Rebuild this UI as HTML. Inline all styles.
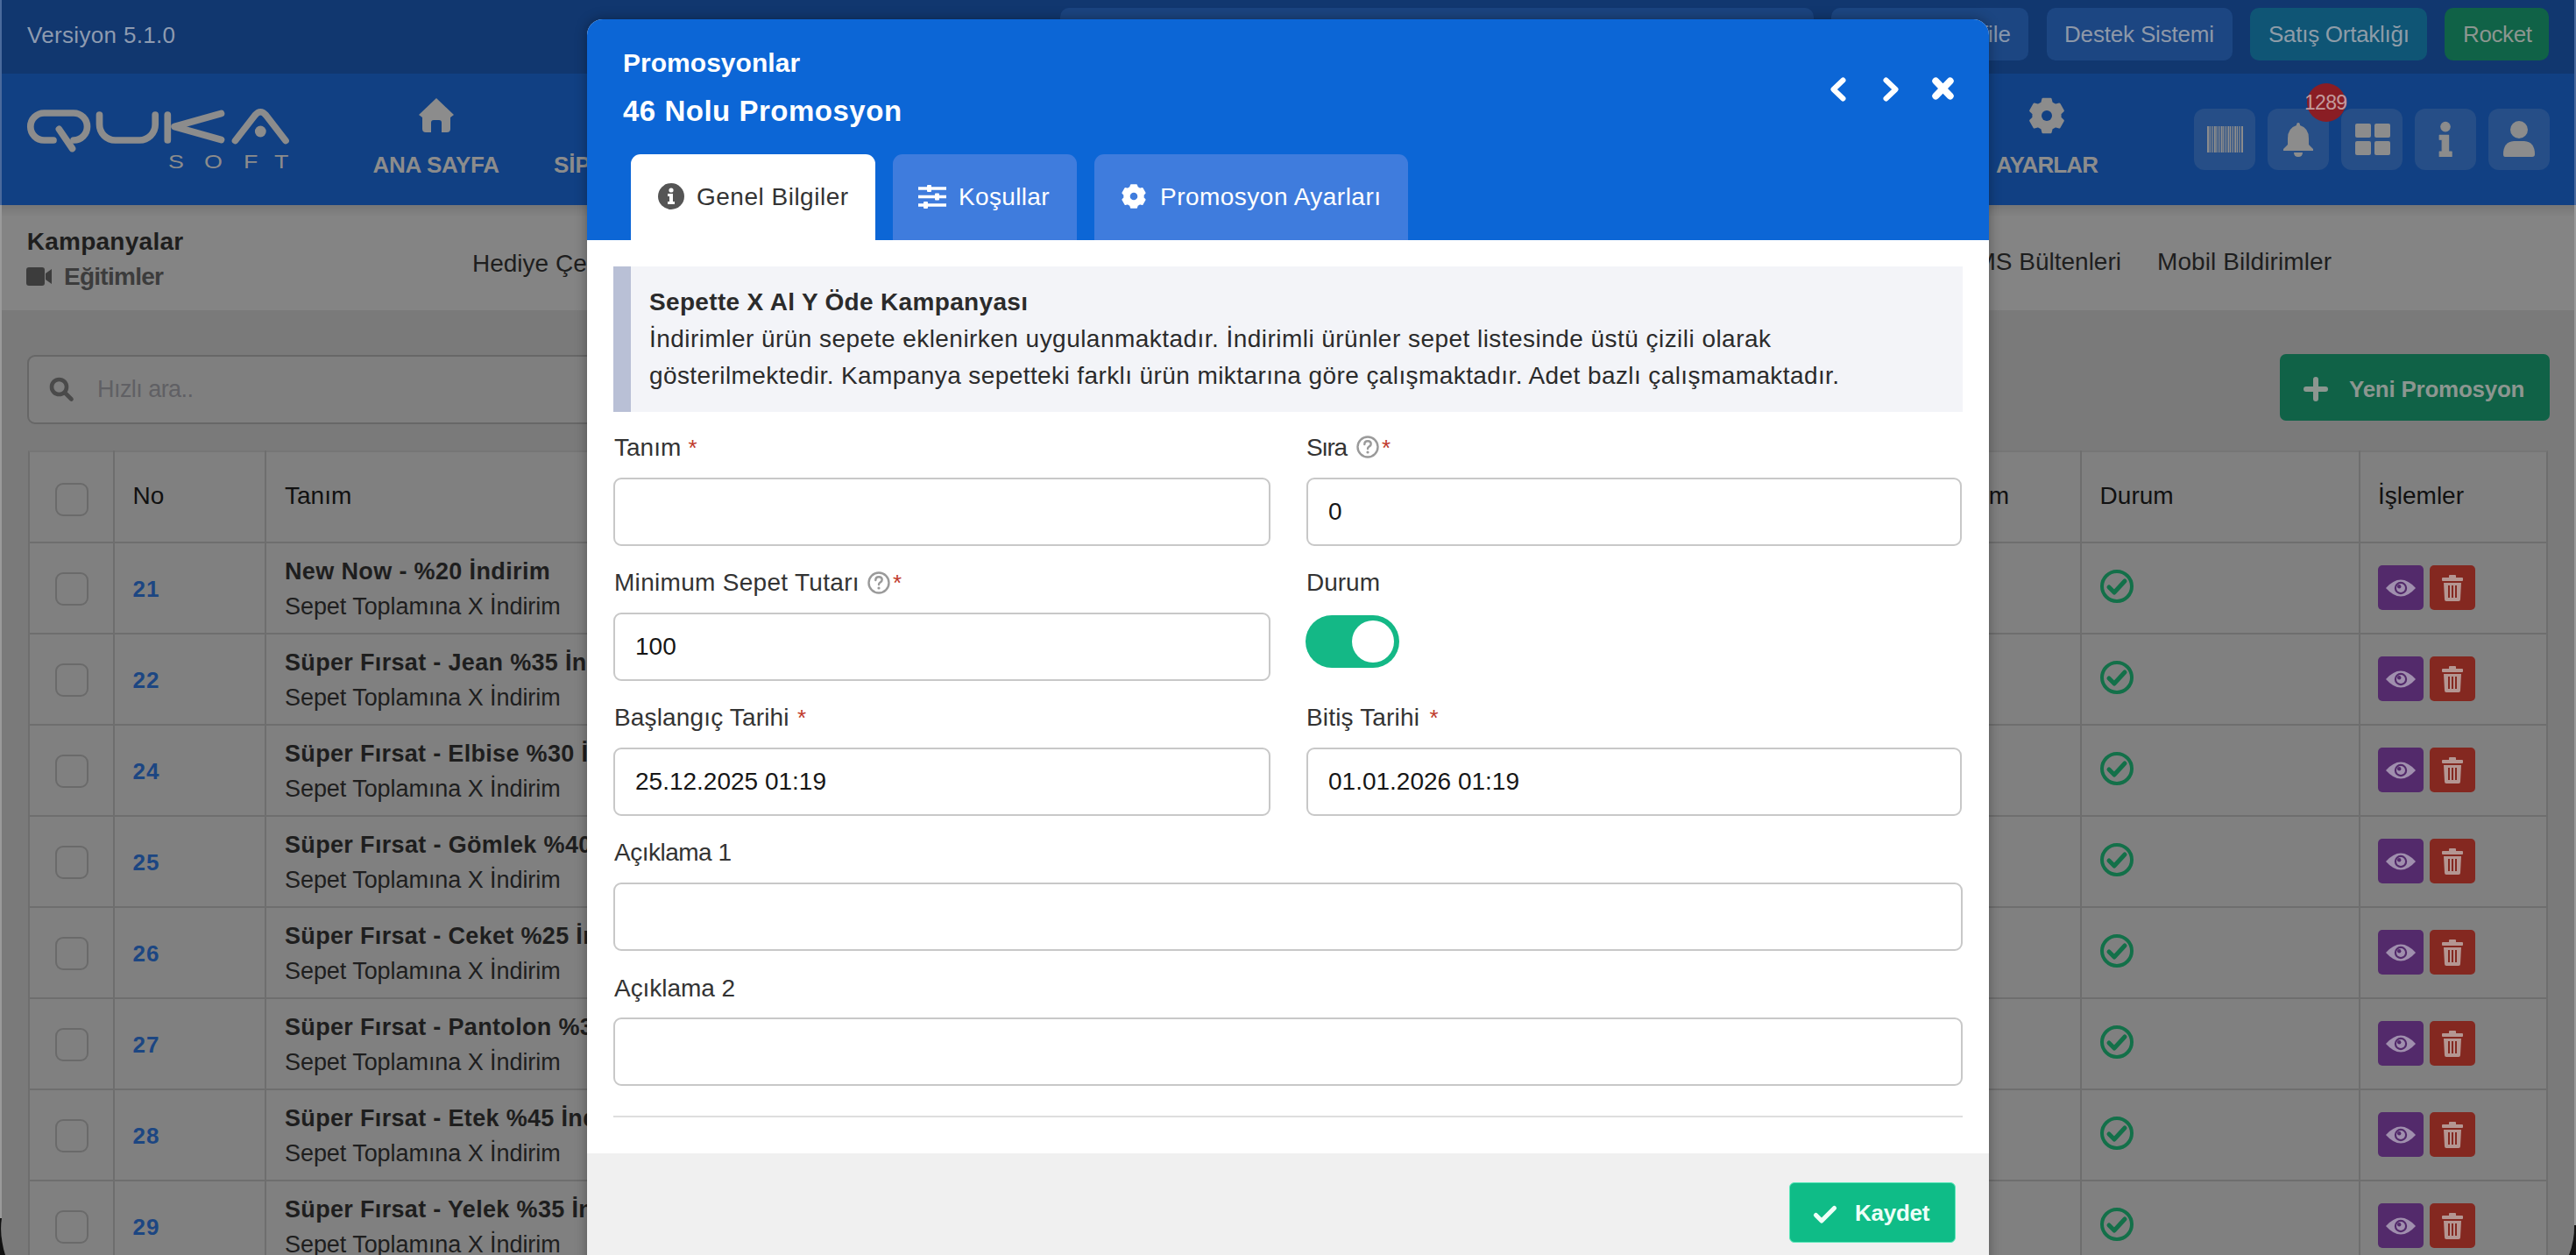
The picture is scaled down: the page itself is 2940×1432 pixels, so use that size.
<!DOCTYPE html>
<html><head><meta charset="utf-8"><style>
*{box-sizing:border-box;margin:0;padding:0}
html,body{width:2940px;height:1432px;overflow:hidden}
body{position:relative;background:#7a7a7a;font-family:"Liberation Sans",sans-serif;color:#1b1b1b}
.a{position:absolute}
.t{position:absolute;white-space:nowrap;line-height:1}
svg{position:absolute;overflow:visible}
</style></head><body>
<div class="a" style="left:0px;top:0px;width:2940px;height:84px;background:#11376f;"></div>
<div class="a" style="left:0px;top:84px;width:2940px;height:150px;background:#114083;"></div>
<div class="a" style="left:0px;top:234px;width:2940px;height:120px;background:#848484;"></div>
<div class="a" style="left:0px;top:234px;width:2940px;height:14px;background:linear-gradient(rgba(0,0,0,0.1),rgba(0,0,0,0));"></div>
<div class="a" style="left:0px;top:0px;width:2px;height:234px;background:#4a6a9c;"></div>
<div class="a" style="left:0px;top:234px;width:2px;height:1198px;background:#9a9a9a;"></div>
<div class="a" style="left:2938px;top:0px;width:2px;height:234px;background:#4a6a9c;"></div>
<div class="a" style="left:2938px;top:234px;width:2px;height:1198px;background:#9a9a9a;"></div>
<div class="t" style="left:31.0px;top:27.0px;font-size:26px;color:#8e9bb0;letter-spacing:0.33px;">Versiyon 5.1.0</div>
<div class="a" style="left:1210px;top:9px;width:860px;height:60px;background:#1b4480;border-radius:10px"></div>
<div class="a" style="left:2090px;top:9px;width:225px;height:60px;background:#1c4682;border-radius:10px"></div>
<div class="t" style="left:1993.0px;top:25.5px;font-size:26px;color:#8796ac;">Mobil Uygulama ve Profile</div>
<div class="a" style="left:2336px;top:9px;width:212px;height:60px;background:#1c4682;border-radius:10px"></div>
<div class="t" style="left:2356.0px;top:25.5px;font-size:26px;color:#8e98a8;letter-spacing:-0.18px;">Destek Sistemi</div>
<div class="a" style="left:2568px;top:9px;width:202px;height:60px;background:#0f5575;border-radius:10px"></div>
<div class="t" style="left:2589.0px;top:25.5px;font-size:26px;color:#8e9ca8;letter-spacing:-0.27px;">Satış Ortaklığı</div>
<div class="a" style="left:2790px;top:9px;width:119px;height:60px;background:#106247;border-radius:10px"></div>
<div class="t" style="left:2811.0px;top:25.5px;font-size:26px;color:#8c9690;letter-spacing:-0.38px;">Rocket</div>
<svg style="left:0;top:0" width="340" height="234" viewBox="0 0 340 234">
<g fill="none" stroke="#8c8c8c" stroke-width="7.7" stroke-linecap="round" stroke-linejoin="round">
<path d="M61 160 H50.3 A15.5 15.5 0 0 1 50.3 129 H84 A15.5 15.5 0 0 1 84 160"/>
<path d="M67.4 147.4 L82.5 169.5"/>
<path d="M113.5 131 V142 A18 18 0 0 0 131.5 160 H159.2 A18 18 0 0 0 177.2 142 V131"/>
<path d="M191.3 131 V160"/>
<path d="M252.5 129.5 L199 144.5 L252.5 159.5"/>
<path d="M268.5 160.5 L291 131.5 Q297.3 124 303.6 131.5 L326 160.5"/>
</g>
<circle cx="297.3" cy="150" r="6.4" fill="#8c8c8c"/>
</svg>
<div class="t" style="left:192.3px;top:174.4px;font-size:22px;color:#8c8c8c;transform:scaleX(1.22);transform-origin:0 0">S</div>
<div class="t" style="left:233.3px;top:174.4px;font-size:22px;color:#8c8c8c;transform:scaleX(1.22);transform-origin:0 0">O</div>
<div class="t" style="left:278.0px;top:174.4px;font-size:22px;color:#8c8c8c;transform:scaleX(1.22);transform-origin:0 0">F</div>
<div class="t" style="left:313.4px;top:174.4px;font-size:22px;color:#8c8c8c;transform:scaleX(1.22);transform-origin:0 0">T</div>
<svg style="left:476px;top:110px" width="44" height="44" viewBox="0 0 44 44"><path fill="#8c8c8c" d="M22 2 L42 21 L38 24 L38 37 Q38 41 34 41 L28 41 L28 30 Q28 27 25 27 L19 27 Q16 27 16 30 L16 41 L10 41 Q6 41 6 37 L6 24 L2 21 Z"/></svg>
<div class="t" style="left:425.5px;top:175.0px;font-size:26px;color:#8c8c8c;font-weight:bold;letter-spacing:-0.30px;">ANA SAYFA</div>
<div class="t" style="left:632.0px;top:175.0px;font-size:26px;color:#8c8c8c;font-weight:bold;">SİPARİŞLER</div>
<svg style="left:2314px;top:110px" width="44" height="44" viewBox="-22 -22 44 44"><path fill="#8c8c8c" stroke="#8c8c8c" stroke-width="2.5" stroke-linejoin="round" d="M-5.55 -14.47 L-4.39 -19.00 L4.39 -19.00 L5.55 -14.47 L9.75 -12.05 L14.26 -13.30 L18.65 -5.70 L15.31 -2.42 L15.31 2.42 L18.65 5.70 L14.26 13.30 L9.75 12.05 L5.55 14.47 L4.39 19.00 L-4.39 19.00 L-5.55 14.47 L-9.75 12.05 L-14.26 13.30 L-18.65 5.70 L-15.31 2.42 L-15.31 -2.42 L-18.65 -5.70 L-14.26 -13.30 L-9.75 -12.05 Z"/><circle r="6" fill="#114083"/></svg>
<div class="t" style="left:2278.0px;top:175.0px;font-size:26px;color:#8c8c8c;font-weight:bold;letter-spacing:-0.89px;">AYARLAR</div>
<div class="a" style="left:2504px;top:124px;width:70px;height:70px;background:#264e87;border-radius:12px"></div>
<div class="a" style="left:2588px;top:124px;width:70px;height:70px;background:#264e87;border-radius:12px"></div>
<div class="a" style="left:2672px;top:124px;width:70px;height:70px;background:#264e87;border-radius:12px"></div>
<div class="a" style="left:2756px;top:124px;width:70px;height:70px;background:#264e87;border-radius:12px"></div>
<div class="a" style="left:2840px;top:124px;width:70px;height:70px;background:#264e87;border-radius:12px"></div>
<svg style="left:0;top:0" width="2940" height="234"><rect x="2519.0" y="144" width="2" height="30" fill="#8c8c8c"/><rect x="2521.6" y="144" width="1.3" height="30" fill="#8c8c8c"/><rect x="2524.2" y="144" width="1.3" height="30" fill="#8c8c8c"/><rect x="2526.8" y="144" width="2" height="30" fill="#8c8c8c"/><rect x="2529.4" y="144" width="1.3" height="30" fill="#8c8c8c"/><rect x="2532.0" y="144" width="1.3" height="30" fill="#8c8c8c"/><rect x="2534.6" y="144" width="2" height="30" fill="#8c8c8c"/><rect x="2537.2" y="144" width="1.3" height="30" fill="#8c8c8c"/><rect x="2539.8" y="144" width="1.3" height="30" fill="#8c8c8c"/><rect x="2542.4" y="144" width="2" height="30" fill="#8c8c8c"/><rect x="2545.0" y="144" width="1.3" height="30" fill="#8c8c8c"/><rect x="2547.6" y="144" width="1.3" height="30" fill="#8c8c8c"/><rect x="2550.2" y="144" width="2" height="30" fill="#8c8c8c"/><rect x="2552.8" y="144" width="1.3" height="30" fill="#8c8c8c"/><rect x="2555.4" y="144" width="1.3" height="30" fill="#8c8c8c"/><rect x="2558.0" y="144" width="2" height="30" fill="#8c8c8c"/></svg>
<svg style="left:2605px;top:138px" width="36" height="42" viewBox="0 0 36 42"><path fill="#8c8c8c" d="M18 2 Q20 2 20 5 Q30 8 30 20 L30 27 L35 32 L35 34 L1 34 L1 32 L6 27 L6 20 Q6 8 16 5 Q16 2 18 2 Z M13 36 H23 Q23 41 18 41 Q13 41 13 36 Z"/></svg>
<svg style="left:2688px;top:141px" width="40" height="36" viewBox="0 0 40 36"><g fill="#8c8c8c"><rect x="0" y="0" width="18" height="16" rx="2"/><rect x="22" y="0" width="18" height="16" rx="2"/><rect x="0" y="20" width="18" height="16" rx="2"/><rect x="22" y="20" width="18" height="16" rx="2"/></g></svg>
<svg style="left:2781px;top:138px" width="20" height="42" viewBox="0 0 20 42"><g fill="#8c8c8c" stroke="#8c8c8c" stroke-width="1.2" stroke-linejoin="round"><circle cx="10" cy="6.6" r="5.2"/><path d="M3.2 16.4 H13.6 V35 H17.1 V40.4 H3.2 V35 H6.2 V21.2 H3.2 Z"/></g></svg>
<svg style="left:2857px;top:138px" width="36" height="42" viewBox="0 0 36 42"><g fill="#8c8c8c"><circle cx="18" cy="10" r="10"/><path d="M2 41 Q0 41 0 38 Q0 24 12 23 L24 23 Q36 24 36 38 Q36 41 33 41 Z"/></g></svg>
<div class="a" style="left:2633px;top:95px;width:44px;height:44px;background:#8a1d24;border-radius:50%"></div>
<div class="t" style="left:2630.0px;top:105.5px;font-size:23px;color:#c29a9c;letter-spacing:-0.72px;">1289</div>
<div class="t" style="left:30.7px;top:262.3px;font-size:28px;color:#1e1e1e;font-weight:bold;letter-spacing:0.26px;">Kampanyalar</div>
<svg style="left:30px;top:305px" width="30" height="21" viewBox="0 0 30 21"><g fill="#3c3c3c"><rect x="0" y="0" width="21" height="21" rx="3"/><path d="M22 7 L29 2 V19 L22 14 Z"/></g></svg>
<div class="t" style="left:73.0px;top:301.8px;font-size:28px;color:#3c3c3c;font-weight:bold;letter-spacing:-0.73px;">Eğitimler</div>
<div class="t" style="left:539.0px;top:286.8px;font-size:28px;color:#1e1e1e;">Hediye Çekleri</div>
<div class="t" style="left:2235.8px;top:284.9px;font-size:28px;color:#1e1e1e;">SMS Bültenleri</div>
<div class="t" style="left:2462.0px;top:284.9px;font-size:28px;color:#1e1e1e;letter-spacing:0.09px;">Mobil Bildirimler</div>
<div class="a" style="left:31px;top:404.5px;width:1950px;height:79px;background:#7f7f7f;border:2px solid #676767;border-radius:9px"></div>
<svg style="left:56px;top:430px" width="30" height="30" viewBox="0 0 30 30"><g fill="none" stroke="#4a4a4a" stroke-width="4.6" stroke-linecap="round"><circle cx="11.5" cy="11.5" r="8.5"/><path d="M18 18 L25.5 25.5"/></g></svg>
<div class="t" style="left:111.0px;top:430.7px;font-size:27px;color:#606064;letter-spacing:-0.55px;">Hızlı ara..</div>
<div class="a" style="left:2602px;top:404px;width:308px;height:76px;background:#106247;border-radius:7px"></div>
<svg style="left:2629px;top:430px" width="28" height="28" viewBox="0 0 28 28"><path d="M14 3 V25 M3 14 H25" stroke="#8c9690" stroke-width="6" stroke-linecap="round"/></svg>
<div class="t" style="left:2681.0px;top:430.8px;font-size:26px;color:#8c9690;font-weight:bold;letter-spacing:-0.25px;">Yeni Promosyon</div>
<div class="a" style="left:32px;top:514px;width:2876px;height:1000px;background:#808080;border-left:2px solid #6e6e6e;border-right:2px solid #6e6e6e;border-top:2px solid #767676"></div>
<div class="a" style="left:129px;top:514px;width:2px;height:1000px;background:#6e6e6e;"></div>
<div class="a" style="left:301.5px;top:514px;width:2px;height:1000px;background:#6e6e6e;"></div>
<div class="a" style="left:2374px;top:514px;width:2px;height:1000px;background:#6e6e6e;"></div>
<div class="a" style="left:2692px;top:514px;width:2px;height:1000px;background:#6e6e6e;"></div>
<div class="a" style="left:32px;top:618px;width:2876px;height:2px;background:#6e6e6e;"></div>
<div class="a" style="left:32px;top:722px;width:2876px;height:2px;background:#6e6e6e;"></div>
<div class="a" style="left:32px;top:826px;width:2876px;height:2px;background:#6e6e6e;"></div>
<div class="a" style="left:32px;top:930px;width:2876px;height:2px;background:#6e6e6e;"></div>
<div class="a" style="left:32px;top:1034px;width:2876px;height:2px;background:#6e6e6e;"></div>
<div class="a" style="left:32px;top:1138px;width:2876px;height:2px;background:#6e6e6e;"></div>
<div class="a" style="left:32px;top:1242px;width:2876px;height:2px;background:#6e6e6e;"></div>
<div class="a" style="left:32px;top:1346px;width:2876px;height:2px;background:#6e6e6e;"></div>
<div class="a" style="left:62.5px;top:551px;width:38px;height:38px;background:transparent;border:2px solid #6a6a6a;border-radius:9px"></div>
<div class="t" style="left:151.6px;top:552.3px;font-size:28px;color:#111;">No</div>
<div class="t" style="left:325.0px;top:552.3px;font-size:28px;color:#111;">Tanım</div>
<div class="t" style="left:2216.8px;top:552.3px;font-size:28px;color:#111;">Tanım</div>
<div class="t" style="left:2396.6px;top:552.3px;font-size:28px;color:#111;">Durum</div>
<div class="t" style="left:2714.0px;top:552.3px;font-size:28px;color:#111;">İşlemler</div>
<div class="a" style="left:62.5px;top:653px;width:38px;height:38px;background:transparent;border:2px solid #6a6a6a;border-radius:9px"></div>
<div class="t" style="left:151.4px;top:659.0px;font-size:26px;color:#1c4682;font-weight:bold;letter-spacing:1.08px;">21</div>
<div class="t" style="left:325.0px;top:638.6px;font-size:27px;color:#1e1e1e;font-weight:bold;letter-spacing:0.36px;">New Now - %20 İndirim</div>
<div class="t" style="left:325.0px;top:678.6px;font-size:27px;color:#1e1e1e;letter-spacing:-0.06px;">Sepet Toplamına X İndirim</div>
<svg style="left:2396px;top:649px" width="40" height="40" viewBox="0 0 40 40"><circle cx="20" cy="20" r="17" fill="none" stroke="#137049" stroke-width="4"/><path d="M11 21 L17 27 L29 14" fill="none" stroke="#137049" stroke-width="5" stroke-linecap="round" stroke-linejoin="round"/></svg>
<div class="a" style="left:2714px;top:645px;width:52px;height:51px;background:#532a6b;border-radius:5px"></div>
<div class="a" style="left:2773px;top:645px;width:52px;height:51px;background:#842820;border-radius:5px"></div>
<svg style="left:2722px;top:659px" width="36" height="24" viewBox="0 0 36 24"><path d="M1 12 Q18 -7 35 12 Q18 31 1 12 Z" fill="#a08fae"/><circle cx="18" cy="12" r="7.2" fill="#532a6b"/><circle cx="18" cy="12" r="5" fill="#a08fae"/><circle cx="16.2" cy="10.2" r="2.2" fill="#532a6b"/></svg>
<svg style="left:2787px;top:656px" width="24" height="30" viewBox="0 0 24 30"><g fill="#b49692"><rect x="0" y="3" width="24" height="4" rx="1"/><rect x="8" y="0" width="8" height="4" rx="1"/><path d="M2 9 H22 L21 28 Q21 30 19 30 H5 Q3 30 3 28 Z"/></g><g stroke="#842820" stroke-width="2"><path d="M8 12 V26 M12 12 V26 M16 12 V26"/></g></svg>
<div class="a" style="left:62.5px;top:757px;width:38px;height:38px;background:transparent;border:2px solid #6a6a6a;border-radius:9px"></div>
<div class="t" style="left:151.4px;top:763.0px;font-size:26px;color:#1c4682;font-weight:bold;letter-spacing:1.08px;">22</div>
<div class="t" style="left:325.0px;top:742.6px;font-size:27px;color:#1e1e1e;font-weight:bold;letter-spacing:0.33px;">Süper Fırsat - Jean %35 İndirim</div>
<div class="t" style="left:325.0px;top:782.6px;font-size:27px;color:#1e1e1e;letter-spacing:-0.06px;">Sepet Toplamına X İndirim</div>
<svg style="left:2396px;top:753px" width="40" height="40" viewBox="0 0 40 40"><circle cx="20" cy="20" r="17" fill="none" stroke="#137049" stroke-width="4"/><path d="M11 21 L17 27 L29 14" fill="none" stroke="#137049" stroke-width="5" stroke-linecap="round" stroke-linejoin="round"/></svg>
<div class="a" style="left:2714px;top:749px;width:52px;height:51px;background:#532a6b;border-radius:5px"></div>
<div class="a" style="left:2773px;top:749px;width:52px;height:51px;background:#842820;border-radius:5px"></div>
<svg style="left:2722px;top:763px" width="36" height="24" viewBox="0 0 36 24"><path d="M1 12 Q18 -7 35 12 Q18 31 1 12 Z" fill="#a08fae"/><circle cx="18" cy="12" r="7.2" fill="#532a6b"/><circle cx="18" cy="12" r="5" fill="#a08fae"/><circle cx="16.2" cy="10.2" r="2.2" fill="#532a6b"/></svg>
<svg style="left:2787px;top:760px" width="24" height="30" viewBox="0 0 24 30"><g fill="#b49692"><rect x="0" y="3" width="24" height="4" rx="1"/><rect x="8" y="0" width="8" height="4" rx="1"/><path d="M2 9 H22 L21 28 Q21 30 19 30 H5 Q3 30 3 28 Z"/></g><g stroke="#842820" stroke-width="2"><path d="M8 12 V26 M12 12 V26 M16 12 V26"/></g></svg>
<div class="a" style="left:62.5px;top:861px;width:38px;height:38px;background:transparent;border:2px solid #6a6a6a;border-radius:9px"></div>
<div class="t" style="left:151.4px;top:867.0px;font-size:26px;color:#1c4682;font-weight:bold;letter-spacing:1.08px;">24</div>
<div class="t" style="left:325.0px;top:846.6px;font-size:27px;color:#1e1e1e;font-weight:bold;letter-spacing:0.32px;">Süper Fırsat - Elbise %30 İndirim</div>
<div class="t" style="left:325.0px;top:886.6px;font-size:27px;color:#1e1e1e;letter-spacing:-0.06px;">Sepet Toplamına X İndirim</div>
<svg style="left:2396px;top:857px" width="40" height="40" viewBox="0 0 40 40"><circle cx="20" cy="20" r="17" fill="none" stroke="#137049" stroke-width="4"/><path d="M11 21 L17 27 L29 14" fill="none" stroke="#137049" stroke-width="5" stroke-linecap="round" stroke-linejoin="round"/></svg>
<div class="a" style="left:2714px;top:853px;width:52px;height:51px;background:#532a6b;border-radius:5px"></div>
<div class="a" style="left:2773px;top:853px;width:52px;height:51px;background:#842820;border-radius:5px"></div>
<svg style="left:2722px;top:867px" width="36" height="24" viewBox="0 0 36 24"><path d="M1 12 Q18 -7 35 12 Q18 31 1 12 Z" fill="#a08fae"/><circle cx="18" cy="12" r="7.2" fill="#532a6b"/><circle cx="18" cy="12" r="5" fill="#a08fae"/><circle cx="16.2" cy="10.2" r="2.2" fill="#532a6b"/></svg>
<svg style="left:2787px;top:864px" width="24" height="30" viewBox="0 0 24 30"><g fill="#b49692"><rect x="0" y="3" width="24" height="4" rx="1"/><rect x="8" y="0" width="8" height="4" rx="1"/><path d="M2 9 H22 L21 28 Q21 30 19 30 H5 Q3 30 3 28 Z"/></g><g stroke="#842820" stroke-width="2"><path d="M8 12 V26 M12 12 V26 M16 12 V26"/></g></svg>
<div class="a" style="left:62.5px;top:965px;width:38px;height:38px;background:transparent;border:2px solid #6a6a6a;border-radius:9px"></div>
<div class="t" style="left:151.4px;top:971.0px;font-size:26px;color:#1c4682;font-weight:bold;letter-spacing:1.08px;">25</div>
<div class="t" style="left:325.0px;top:950.6px;font-size:27px;color:#1e1e1e;font-weight:bold;letter-spacing:0.34px;">Süper Fırsat - Gömlek %40 İndirim</div>
<div class="t" style="left:325.0px;top:990.6px;font-size:27px;color:#1e1e1e;letter-spacing:-0.06px;">Sepet Toplamına X İndirim</div>
<svg style="left:2396px;top:961px" width="40" height="40" viewBox="0 0 40 40"><circle cx="20" cy="20" r="17" fill="none" stroke="#137049" stroke-width="4"/><path d="M11 21 L17 27 L29 14" fill="none" stroke="#137049" stroke-width="5" stroke-linecap="round" stroke-linejoin="round"/></svg>
<div class="a" style="left:2714px;top:957px;width:52px;height:51px;background:#532a6b;border-radius:5px"></div>
<div class="a" style="left:2773px;top:957px;width:52px;height:51px;background:#842820;border-radius:5px"></div>
<svg style="left:2722px;top:971px" width="36" height="24" viewBox="0 0 36 24"><path d="M1 12 Q18 -7 35 12 Q18 31 1 12 Z" fill="#a08fae"/><circle cx="18" cy="12" r="7.2" fill="#532a6b"/><circle cx="18" cy="12" r="5" fill="#a08fae"/><circle cx="16.2" cy="10.2" r="2.2" fill="#532a6b"/></svg>
<svg style="left:2787px;top:968px" width="24" height="30" viewBox="0 0 24 30"><g fill="#b49692"><rect x="0" y="3" width="24" height="4" rx="1"/><rect x="8" y="0" width="8" height="4" rx="1"/><path d="M2 9 H22 L21 28 Q21 30 19 30 H5 Q3 30 3 28 Z"/></g><g stroke="#842820" stroke-width="2"><path d="M8 12 V26 M12 12 V26 M16 12 V26"/></g></svg>
<div class="a" style="left:62.5px;top:1069px;width:38px;height:38px;background:transparent;border:2px solid #6a6a6a;border-radius:9px"></div>
<div class="t" style="left:151.4px;top:1075.0px;font-size:26px;color:#1c4682;font-weight:bold;letter-spacing:1.08px;">26</div>
<div class="t" style="left:325.0px;top:1054.6px;font-size:27px;color:#1e1e1e;font-weight:bold;letter-spacing:0.33px;">Süper Fırsat - Ceket %25 İndirim</div>
<div class="t" style="left:325.0px;top:1094.6px;font-size:27px;color:#1e1e1e;letter-spacing:-0.06px;">Sepet Toplamına X İndirim</div>
<svg style="left:2396px;top:1065px" width="40" height="40" viewBox="0 0 40 40"><circle cx="20" cy="20" r="17" fill="none" stroke="#137049" stroke-width="4"/><path d="M11 21 L17 27 L29 14" fill="none" stroke="#137049" stroke-width="5" stroke-linecap="round" stroke-linejoin="round"/></svg>
<div class="a" style="left:2714px;top:1061px;width:52px;height:51px;background:#532a6b;border-radius:5px"></div>
<div class="a" style="left:2773px;top:1061px;width:52px;height:51px;background:#842820;border-radius:5px"></div>
<svg style="left:2722px;top:1075px" width="36" height="24" viewBox="0 0 36 24"><path d="M1 12 Q18 -7 35 12 Q18 31 1 12 Z" fill="#a08fae"/><circle cx="18" cy="12" r="7.2" fill="#532a6b"/><circle cx="18" cy="12" r="5" fill="#a08fae"/><circle cx="16.2" cy="10.2" r="2.2" fill="#532a6b"/></svg>
<svg style="left:2787px;top:1072px" width="24" height="30" viewBox="0 0 24 30"><g fill="#b49692"><rect x="0" y="3" width="24" height="4" rx="1"/><rect x="8" y="0" width="8" height="4" rx="1"/><path d="M2 9 H22 L21 28 Q21 30 19 30 H5 Q3 30 3 28 Z"/></g><g stroke="#842820" stroke-width="2"><path d="M8 12 V26 M12 12 V26 M16 12 V26"/></g></svg>
<div class="a" style="left:62.5px;top:1173px;width:38px;height:38px;background:transparent;border:2px solid #6a6a6a;border-radius:9px"></div>
<div class="t" style="left:151.4px;top:1179.0px;font-size:26px;color:#1c4682;font-weight:bold;letter-spacing:1.08px;">27</div>
<div class="t" style="left:325.0px;top:1158.6px;font-size:27px;color:#1e1e1e;font-weight:bold;letter-spacing:0.33px;">Süper Fırsat - Pantolon %30 İndirim</div>
<div class="t" style="left:325.0px;top:1198.6px;font-size:27px;color:#1e1e1e;letter-spacing:-0.06px;">Sepet Toplamına X İndirim</div>
<svg style="left:2396px;top:1169px" width="40" height="40" viewBox="0 0 40 40"><circle cx="20" cy="20" r="17" fill="none" stroke="#137049" stroke-width="4"/><path d="M11 21 L17 27 L29 14" fill="none" stroke="#137049" stroke-width="5" stroke-linecap="round" stroke-linejoin="round"/></svg>
<div class="a" style="left:2714px;top:1165px;width:52px;height:51px;background:#532a6b;border-radius:5px"></div>
<div class="a" style="left:2773px;top:1165px;width:52px;height:51px;background:#842820;border-radius:5px"></div>
<svg style="left:2722px;top:1179px" width="36" height="24" viewBox="0 0 36 24"><path d="M1 12 Q18 -7 35 12 Q18 31 1 12 Z" fill="#a08fae"/><circle cx="18" cy="12" r="7.2" fill="#532a6b"/><circle cx="18" cy="12" r="5" fill="#a08fae"/><circle cx="16.2" cy="10.2" r="2.2" fill="#532a6b"/></svg>
<svg style="left:2787px;top:1176px" width="24" height="30" viewBox="0 0 24 30"><g fill="#b49692"><rect x="0" y="3" width="24" height="4" rx="1"/><rect x="8" y="0" width="8" height="4" rx="1"/><path d="M2 9 H22 L21 28 Q21 30 19 30 H5 Q3 30 3 28 Z"/></g><g stroke="#842820" stroke-width="2"><path d="M8 12 V26 M12 12 V26 M16 12 V26"/></g></svg>
<div class="a" style="left:62.5px;top:1277px;width:38px;height:38px;background:transparent;border:2px solid #6a6a6a;border-radius:9px"></div>
<div class="t" style="left:151.4px;top:1283.0px;font-size:26px;color:#1c4682;font-weight:bold;letter-spacing:1.08px;">28</div>
<div class="t" style="left:325.0px;top:1262.6px;font-size:27px;color:#1e1e1e;font-weight:bold;letter-spacing:0.33px;">Süper Fırsat - Etek %45 İndirim</div>
<div class="t" style="left:325.0px;top:1302.6px;font-size:27px;color:#1e1e1e;letter-spacing:-0.06px;">Sepet Toplamına X İndirim</div>
<svg style="left:2396px;top:1273px" width="40" height="40" viewBox="0 0 40 40"><circle cx="20" cy="20" r="17" fill="none" stroke="#137049" stroke-width="4"/><path d="M11 21 L17 27 L29 14" fill="none" stroke="#137049" stroke-width="5" stroke-linecap="round" stroke-linejoin="round"/></svg>
<div class="a" style="left:2714px;top:1269px;width:52px;height:51px;background:#532a6b;border-radius:5px"></div>
<div class="a" style="left:2773px;top:1269px;width:52px;height:51px;background:#842820;border-radius:5px"></div>
<svg style="left:2722px;top:1283px" width="36" height="24" viewBox="0 0 36 24"><path d="M1 12 Q18 -7 35 12 Q18 31 1 12 Z" fill="#a08fae"/><circle cx="18" cy="12" r="7.2" fill="#532a6b"/><circle cx="18" cy="12" r="5" fill="#a08fae"/><circle cx="16.2" cy="10.2" r="2.2" fill="#532a6b"/></svg>
<svg style="left:2787px;top:1280px" width="24" height="30" viewBox="0 0 24 30"><g fill="#b49692"><rect x="0" y="3" width="24" height="4" rx="1"/><rect x="8" y="0" width="8" height="4" rx="1"/><path d="M2 9 H22 L21 28 Q21 30 19 30 H5 Q3 30 3 28 Z"/></g><g stroke="#842820" stroke-width="2"><path d="M8 12 V26 M12 12 V26 M16 12 V26"/></g></svg>
<div class="a" style="left:62.5px;top:1381px;width:38px;height:38px;background:transparent;border:2px solid #6a6a6a;border-radius:9px"></div>
<div class="t" style="left:151.4px;top:1387.0px;font-size:26px;color:#1c4682;font-weight:bold;letter-spacing:1.08px;">29</div>
<div class="t" style="left:325.0px;top:1366.6px;font-size:27px;color:#1e1e1e;font-weight:bold;letter-spacing:0.33px;">Süper Fırsat - Yelek %35 İndirim</div>
<div class="t" style="left:325.0px;top:1406.6px;font-size:27px;color:#1e1e1e;letter-spacing:-0.06px;">Sepet Toplamına X İndirim</div>
<svg style="left:2396px;top:1377px" width="40" height="40" viewBox="0 0 40 40"><circle cx="20" cy="20" r="17" fill="none" stroke="#137049" stroke-width="4"/><path d="M11 21 L17 27 L29 14" fill="none" stroke="#137049" stroke-width="5" stroke-linecap="round" stroke-linejoin="round"/></svg>
<div class="a" style="left:2714px;top:1373px;width:52px;height:51px;background:#532a6b;border-radius:5px"></div>
<div class="a" style="left:2773px;top:1373px;width:52px;height:51px;background:#842820;border-radius:5px"></div>
<svg style="left:2722px;top:1387px" width="36" height="24" viewBox="0 0 36 24"><path d="M1 12 Q18 -7 35 12 Q18 31 1 12 Z" fill="#a08fae"/><circle cx="18" cy="12" r="7.2" fill="#532a6b"/><circle cx="18" cy="12" r="5" fill="#a08fae"/><circle cx="16.2" cy="10.2" r="2.2" fill="#532a6b"/></svg>
<svg style="left:2787px;top:1384px" width="24" height="30" viewBox="0 0 24 30"><g fill="#b49692"><rect x="0" y="3" width="24" height="4" rx="1"/><rect x="8" y="0" width="8" height="4" rx="1"/><path d="M2 9 H22 L21 28 Q21 30 19 30 H5 Q3 30 3 28 Z"/></g><g stroke="#842820" stroke-width="2"><path d="M8 12 V26 M12 12 V26 M16 12 V26"/></g></svg>
<svg style="left:0;top:0" width="2940" height="1432"><path d="M2938 1398 A88 88 0 0 1 2932 1432 L2940 1432 L2940 1398 Z" fill="#111"/><path d="M2 1390 A100 100 0 0 0 6 1432 L0 1432 L0 1390 Z" fill="#111"/></svg>
<div class="a" style="left:670px;top:22px;width:1600px;height:1500px;background:#fff;border-radius:18px 18px 0 0;overflow:hidden;box-shadow:0 0 14px rgba(0,0,0,0.35)">
<div class="a" style="left:0px;top:0px;width:1600px;height:252px;background:#0c66d6;"></div>
<div class="t" style="left:41.0px;top:35.1px;font-size:30px;color:#fff;font-weight:bold;letter-spacing:0.03px;">Promosyonlar</div>
<div class="t" style="left:41.0px;top:87.7px;font-size:33px;color:#fff;font-weight:bold;letter-spacing:0.51px;">46 Nolu Promosyon</div>
<svg style="left:1412px;top:60px" width="160" height="40" viewBox="0 0 160 40"><g fill="none" stroke="#fff" stroke-width="6" stroke-linecap="round" stroke-linejoin="round">
<path d="M21.5 9.5 L10.5 20 L21.5 30.5"/><path d="M70.5 9.5 L81.5 20 L70.5 30.5"/></g><g stroke="#fff" stroke-width="8" stroke-linecap="round"><path d="M127.3 10.5 L143.7 27.5 M143.7 10.5 L127.3 27.5"/></g></svg>
<div class="a" style="left:50px;top:154px;width:279px;height:98px;background:#fff;border-radius:11px 11px 0 0"></div>
<div class="a" style="left:349px;top:154px;width:209.5px;height:98px;background:#3f7cdd;border-radius:11px 11px 0 0"></div>
<div class="a" style="left:579px;top:154px;width:357.6px;height:98px;background:#3f7cdd;border-radius:11px 11px 0 0"></div>
<svg style="left:80px;top:186px" width="32" height="32" viewBox="0 0 32 32"><circle cx="16" cy="16" r="15" fill="#555"/><circle cx="16" cy="9" r="2.6" fill="#fff"/><path d="M12 13 H18 V22 H20 V25 H12 V22 H14 V16 H12 Z" fill="#fff"/></svg>
<div class="t" style="left:125.0px;top:189.3px;font-size:28px;color:#333;letter-spacing:0.50px;">Genel Bilgiler</div>
<svg style="left:378px;top:189px" width="32" height="28" viewBox="0 0 32 28"><g stroke="#fff" stroke-width="3.5"><path d="M0 4 H32 M0 13.5 H32 M0 23 H32"/></g><g fill="#fff"><rect x="10" y="0" width="5" height="8" rx="1"/><rect x="19" y="9.5" width="5" height="8" rx="1"/><rect x="6" y="19" width="5" height="8" rx="1"/></g></svg>
<div class="t" style="left:424.0px;top:189.3px;font-size:28px;color:#fff;letter-spacing:0.34px;">Koşullar</div>
<svg style="left:609px;top:187px" width="30" height="30" viewBox="-15 -15 30 30"><path fill="#fff" stroke="#fff" stroke-width="2" stroke-linejoin="round" d="M-3.87 -10.08 L-2.97 -12.86 L2.97 -12.86 L3.87 -10.08 L6.80 -8.39 L9.65 -9.00 L12.62 -3.86 L10.67 -1.69 L10.67 1.69 L12.62 3.86 L9.65 9.00 L6.80 8.39 L3.87 10.08 L2.97 12.86 L-2.97 12.86 L-3.87 10.08 L-6.80 8.39 L-9.65 9.00 L-12.62 3.86 L-10.67 1.69 L-10.67 -1.69 L-12.62 -3.86 L-9.65 -9.00 L-6.80 -8.39 Z"/><circle r="4.3" fill="#3f7cdd"/></svg>
<div class="t" style="left:654.0px;top:189.3px;font-size:28px;color:#fff;letter-spacing:0.48px;">Promosyon Ayarları</div>
<div class="a" style="left:30px;top:282px;width:1540px;height:166px;background:#f3f4f8;"></div>
<div class="a" style="left:30px;top:282px;width:20px;height:166px;background:#b9c0d6;"></div>
<div class="t" style="left:71.0px;top:309.3px;font-size:28px;color:#2b2b2b;font-weight:bold;letter-spacing:0.33px;">Sepette X Al Y Öde Kampanyası</div>
<div class="t" style="left:71.0px;top:351.3px;font-size:28px;color:#2b2b2b;letter-spacing:0.46px;">İndirimler ürün sepete eklenirken uygulanmaktadır. İndirimli ürünler sepet listesinde üstü çizili olarak</div>
<div class="t" style="left:71.0px;top:393.3px;font-size:28px;color:#2b2b2b;letter-spacing:0.41px;">gösterilmektedir. Kampanya sepetteki farklı ürün miktarına göre çalışmaktadır. Adet bazlı çalışmamaktadır.</div>
<div class="t" style="left:31.0px;top:475.3px;font-size:28px;color:#333;">Tanım</div>
<div class="t" style="left:115.6px;top:475.5px;font-size:26px;color:#c0392b;">*</div>
<div class="a" style="left:30px;top:523px;width:750px;height:78px;background:#fff;border:2px solid #c8c8c8;border-radius:9px"></div>
<div class="t" style="left:821.0px;top:475.3px;font-size:28px;color:#333;letter-spacing:-1.45px;">Sıra</div>
<svg style="left:878px;top:475px" width="26" height="26" viewBox="0 0 26 26"><circle cx="13" cy="13" r="11.5" fill="none" stroke="#9a9a9a" stroke-width="2.4"/><path d="M9.3 10 Q9.3 6.3 13 6.3 Q16.7 6.3 16.7 9.6 Q16.7 11.6 14.5 12.6 Q13 13.3 13 15" fill="none" stroke="#9a9a9a" stroke-width="2.4" stroke-linecap="round"/><circle cx="13" cy="19" r="1.6" fill="#9a9a9a"/></svg>
<div class="t" style="left:907.0px;top:475.5px;font-size:26px;color:#c0392b;">*</div>
<div class="a" style="left:821px;top:523px;width:748px;height:78px;background:#fff;border:2px solid #c8c8c8;border-radius:9px"></div>
<div class="t" style="left:846.0px;top:548.3px;font-size:28px;color:#161616;">0</div>
<div class="t" style="left:31.0px;top:629.3px;font-size:28px;color:#333;letter-spacing:0.30px;">Minimum Sepet Tutarı</div>
<svg style="left:320px;top:630px" width="26" height="26" viewBox="0 0 26 26"><circle cx="13" cy="13" r="11.5" fill="none" stroke="#9a9a9a" stroke-width="2.4"/><path d="M9.3 10 Q9.3 6.3 13 6.3 Q16.7 6.3 16.7 9.6 Q16.7 11.6 14.5 12.6 Q13 13.3 13 15" fill="none" stroke="#9a9a9a" stroke-width="2.4" stroke-linecap="round"/><circle cx="13" cy="19" r="1.6" fill="#9a9a9a"/></svg>
<div class="t" style="left:349.0px;top:629.5px;font-size:26px;color:#c0392b;">*</div>
<div class="a" style="left:30px;top:677px;width:750px;height:78px;background:#fff;border:2px solid #c8c8c8;border-radius:9px"></div>
<div class="t" style="left:55.0px;top:702.3px;font-size:28px;color:#161616;">100</div>
<div class="t" style="left:821.0px;top:629.3px;font-size:28px;color:#333;">Durum</div>
<div class="a" style="left:820px;top:680px;width:107px;height:60px;background:#14b886;border-radius:30px"></div>
<div class="a" style="left:873px;top:685.5px;width:48px;height:48px;background:#fff;border-radius:50%"></div>
<div class="t" style="left:31.0px;top:783.3px;font-size:28px;color:#333;letter-spacing:0.16px;">Başlangıç Tarihi</div>
<div class="t" style="left:240.0px;top:783.5px;font-size:26px;color:#c0392b;">*</div>
<div class="a" style="left:30px;top:831px;width:750px;height:78px;background:#fff;border:2px solid #c8c8c8;border-radius:9px"></div>
<div class="t" style="left:55.0px;top:856.3px;font-size:28px;color:#161616;">25.12.2025 01:19</div>
<div class="t" style="left:821.0px;top:783.3px;font-size:28px;color:#333;letter-spacing:0.17px;">Bitiş Tarihi</div>
<div class="t" style="left:961.6px;top:783.5px;font-size:26px;color:#c0392b;">*</div>
<div class="a" style="left:821px;top:831px;width:748px;height:78px;background:#fff;border:2px solid #c8c8c8;border-radius:9px"></div>
<div class="t" style="left:846.0px;top:856.3px;font-size:28px;color:#161616;">01.01.2026 01:19</div>
<div class="t" style="left:31.0px;top:937.3px;font-size:28px;color:#333;letter-spacing:-0.50px;">Açıklama 1</div>
<div class="a" style="left:30px;top:985px;width:1540px;height:78px;background:#fff;border:2px solid #c8c8c8;border-radius:9px"></div>
<div class="t" style="left:31.0px;top:1091.8px;font-size:28px;color:#333;letter-spacing:-0.05px;">Açıklama 2</div>
<div class="a" style="left:30px;top:1139px;width:1540px;height:78px;background:#fff;border:2px solid #c8c8c8;border-radius:9px"></div>
<div class="a" style="left:30px;top:1251px;width:1540px;height:2px;background:#dedede;"></div>
<div class="a" style="left:0px;top:1294px;width:1600px;height:300px;background:#f0f0f0;"></div>
<div class="a" style="left:1372px;top:1327px;width:190px;height:69px;background:#0fbc87;border-radius:6px;border:1px solid #5de8bb"></div>
<svg style="left:1398px;top:1352px" width="30" height="24" viewBox="0 0 30 24"><path d="M4.5 12.5 L11 19 L25.5 4.5" fill="none" stroke="#eefff8" stroke-width="5.2" stroke-linecap="round" stroke-linejoin="round"/></svg>
<div class="t" style="left:1447.0px;top:1349.0px;font-size:26px;color:#eefff8;font-weight:bold;letter-spacing:-0.24px;">Kaydet</div>
</div>
</body></html>
